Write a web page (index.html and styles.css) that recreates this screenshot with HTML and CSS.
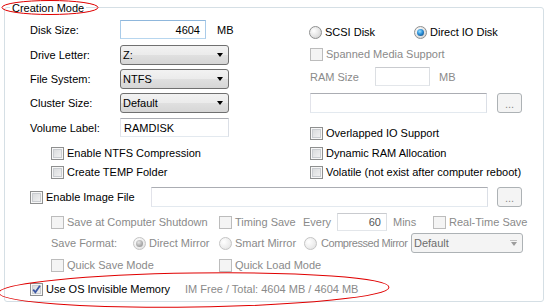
FILE: index.html
```html
<!DOCTYPE html>
<html>
<head>
<meta charset="utf-8">
<link rel="stylesheet" href="styles.css">
</head>
<body>
<div class="group">
  <div class="title">Creation Mode</div>
  <div class="top">
    <div class="left">
      <div class="row r1"><span class="lbl">Disk Size:</span><div class="tb focus num w86">4604</div><span class="unit">MB</span></div>
      <div class="row r2"><span class="lbl">Drive Letter:</span><div class="combo">Z:</div></div>
      <div class="row r3"><span class="lbl">File System:</span><div class="combo">NTFS</div></div>
      <div class="row r3"><span class="lbl">Cluster Size:</span><div class="combo">Default</div></div>
      <div class="row r5"><span class="lbl">Volume Label:</span><div class="tb w109">RAMDISK</div></div>
      <div class="opt ind c1"><span class="cb"></span>Enable NTFS Compression</div>
      <div class="opt ind c2"><span class="cb"></span>Create TEMP Folder</div>
    </div>
    <div class="right">
      <div class="radios">
        <div class="opt w105 neg"><span class="rb"></span>SCSI Disk</div>
        <div class="opt"><span class="rb on"></span>Direct IO Disk</div>
      </div>
      <div class="opt g sp"><span class="cb dis"></span>Spanned Media Support</div>
      <div class="row ram"><span class="lbl2 g">RAM Size</span><div class="tb dis w55"></div><span class="unit2 g">MB</span></div>
      <div class="row path"><div class="tb w177"></div><div class="btn">...</div></div>
      <div class="opt o1"><span class="cb"></span>Overlapped IO Support</div>
      <div class="opt c1b"><span class="cb"></span>Dynamic RAM Allocation</div>
      <div class="opt c2"><span class="cb"></span>Volatile (not exist after computer reboot)</div>
    </div>
  </div>
  <div class="row img">
    <div class="opt w121"><span class="cb"></span>Enable Image File</div>
    <div class="tb w337"></div>
    <div class="btn b9">...</div>
  </div>
  <div class="row ra ind">
    <div class="opt g w168"><span class="cb dis"></span>Save at Computer Shutdown</div>
    <div class="opt g w84"><span class="cb dis"></span>Timing Save</div>
    <span class="g w34">Every</span>
    <div class="tb dis num w50 gt">60</div>
    <span class="g w46 pl6">Mins</span>
    <div class="opt g"><span class="cb dis"></span>Real-Time Save</div>
  </div>
  <div class="row rb2 ind">
    <span class="g w82">Save Format:</span>
    <div class="opt g w86"><span class="rb dis on"></span>Direct Mirror</div>
    <div class="opt g w85"><span class="rb dis"></span>Smart Mirror</div>
    <div class="opt g w107 tight"><span class="rb dis"></span>Compressed Mirror</div>
    <div class="combo dis w112">Default</div>
  </div>
  <div class="row rc ind">
    <div class="opt g w168"><span class="cb dis"></span>Quick Save Mode</div>
    <div class="opt g"><span class="cb dis"></span>Quick Load Mode</div>
  </div>
  <div class="row rd">
    <div class="opt w155"><span class="cb checked"><svg width="11" height="11" viewBox="0 0 11 11"><path d="M2.2 5.6 L4.4 8.3 L8.9 1.8" fill="none" stroke="#3b56a3" stroke-width="1.8"/></svg></span>Use OS Invisible Memory</div>
    <span class="g">IM Free / Total: 4604 MB / 4604 MB</span>
  </div>
</div>
<svg class="marks" width="552" height="308" viewBox="0 0 552 308">
  <ellipse cx="50" cy="7.5" rx="48" ry="7" fill="none" stroke="#e00000" stroke-width="1"/>
  <ellipse cx="194" cy="290" rx="195" ry="17" fill="none" stroke="#e00000" stroke-width="1" transform="rotate(-0.8 194 290)"/>
</svg>
</body>
</html>
```
FILE: styles.css
```css
body {
  margin: 0;
  font: 11px "Liberation Sans", Arial, sans-serif;
  color: #000;
  background: #fff;
  width: 552px;
  height: 308px;
  overflow: hidden;
  position: relative;
}
.group {
  position: relative;
  box-sizing: border-box;
  margin: 7px 0 0 4px;
  width: 540px;
  height: 295px;
  border: 1px solid #d5dfe5;
  border-radius: 3px;
  padding: 12px 0 0 25px;
}
.title {
  position: absolute;
  left: 5px;
  top: -7px;
  padding: 0 2px;
  background: #fff;
  line-height: 14px;
}
.top { display: flex; }
.left { width: 279px; }
.right { padding-left: 1px; }
.row { display: flex; align-items: center; }
.lbl { width: 90px; flex: none; }
.r1 { height: 19px; }
.r2 { height: 20px; margin-top: 6px; }
.r3 { height: 20px; margin-top: 4px; }
.r5 { height: 19px; margin-top: 5px; }
.unit { margin-left: 11px; }
.opt {
  display: flex;
  align-items: center;
  height: 16px;
  white-space: nowrap;
  flex: none;
}
.opt .cb, .opt .rb { margin-right: 3px; flex: none; }
.tight { letter-spacing: -0.45px; }
.tight .rb { margin-right: 4px; }
.ind { margin-left: 21px; }
.c1 { margin-top: 8px; }
.c2 { margin-top: 3px; }
.c1b { margin-top: 4px; }
.radios { display: flex; margin-top: 4px; }
.neg { margin-left: -1px; }
.sp { margin-top: 6px; }
.ram { height: 19px; margin-top: 5px; }
.lbl2 { width: 65px; }
.unit2 { margin-left: 9px; }
.path { height: 20px; margin-top: 7px; }
.o1 { margin-top: 12px; }
.img { height: 20px; margin-top: 7px; }
.ra { height: 18px; margin-top: 6px; }
.rb2 { height: 20px; margin-top: 2px; }
.rc { height: 16px; margin-top: 4px; }
.rd { height: 16px; margin-top: 8px; }

.w34 { width: 34px; flex: none; }
.w46 { width: 46px; flex: none; box-sizing: border-box; }
.pl6 { padding-left: 6px; }
.w50 { width: 50px; }
.w55 { width: 55px; }
.w82 { width: 82px; flex: none; }
.w84 { width: 84px; }
.w85 { width: 85px; }
.w86 { width: 86px; }
.w105 { width: 105px; }
.w107 { width: 107px; }
.w109 { width: 109px; }
.w112 { width: 112px; }
.w121 { width: 121px; }
.w155 { width: 155px; }
.w168 { width: 168px; }
.w177 { width: 177px; }
.w337 { width: 337px; }

.g { color: #8a8a8a; }
.gt { color: #555; }

.cb {
  box-sizing: border-box;
  display: block;
  width: 13px;
  height: 13px;
  border: 1px solid #8e8f8f;
  background: linear-gradient(135deg, #d4d6d8, #f6f6f6);
  box-shadow: inset 0 0 0 1px #f7f7f7, inset 0 0 0 2px #c9ccd0;
  position: relative;
}
.cb.dis {
  border-color: #bcbcbc;
  background: #f4f4f4;
  box-shadow: none;
}
.cb.checked svg { position: absolute; left: 0; top: 0; }

.rb {
  box-sizing: border-box;
  display: block;
  width: 13px;
  height: 13px;
  border-radius: 50%;
  border: 1px solid #8e8f8f;
  background: radial-gradient(circle at 35% 35%, #ffffff 0%, #e6e6e6 50%, #c8c8c8 100%);
  position: relative;
}
.rb.on::after {
  content: "";
  position: absolute;
  left: 2px;
  top: 2px;
  width: 7px;
  height: 7px;
  border-radius: 50%;
  background: radial-gradient(circle at 40% 35%, #9be0ff 0%, #2b8fd8 45%, #0c3b6b 100%);
}
.rb.dis {
  border-color: #c4c4c4;
  background: radial-gradient(circle at 35% 35%, #ffffff 0%, #ececec 60%, #dcdcdc 100%);
}
.rb.dis.on::after {
  background: radial-gradient(circle at 40% 35%, #e8e8e8 0%, #a8a8a8 60%, #8c8c8c 100%);
}

.tb {
  box-sizing: border-box;
  height: 100%;
  border: 1px solid;
  border-color: #abadb3 #dbdfe6 #e3e9ef #e2e3ea;
  background: #fff;
  display: flex;
  align-items: center;
  padding: 0 3px;
  flex: none;
}
.tb.focus { border-color: #8fb7dc #a9cbe9 #b7d6ef #a9cbe9; }
.tb.num { justify-content: flex-end; padding-right: 5px; }
.tb.dis { border-color: #c9cbcf #dcdfe3 #e3e6ea #dcdfe3; }

.combo {
  box-sizing: border-box;
  height: 100%;
  width: 109px;
  border: 1px solid #707070;
  border-radius: 3px;
  background: linear-gradient(#f2f2f2, #ebebeb 50%, #e0e0e0 50%, #d6d6d6);
  display: flex;
  align-items: center;
  padding-left: 2px;
  position: relative;
  flex: none;
}
.combo::after {
  content: "";
  position: absolute;
  right: 5px;
  top: 7px;
  border-top: 4px solid #000;
  border-left: 3.5px solid transparent;
  border-right: 3.5px solid transparent;
}
.combo.dis {
  width: 112px;
  border-color: #adb2b5;
  background: #f4f4f4;
  color: #6d6d6d;
}
.combo.dis::after { border-top-color: #9c9c9c; top: 8px; }
.combo.dis::before {
  content: "";
  position: absolute;
  right: 5px;
  top: 6px;
  width: 7px;
  height: 1px;
  background: #c0c0c0;
}

.btn {
  box-sizing: border-box;
  width: 25px;
  height: 20px;
  margin-left: 10px;
  border: 1px solid #adb2b5;
  border-radius: 3px;
  background: #f4f4f4;
  color: #8a8a8a;
  display: flex;
  align-items: flex-end;
  justify-content: center;
  padding-bottom: 3px;
  line-height: 10px;
  flex: none;
}
.b9 { margin-left: 9px; }

.marks {
  position: absolute;
  left: 0;
  top: 0;
  pointer-events: none;
}
```
